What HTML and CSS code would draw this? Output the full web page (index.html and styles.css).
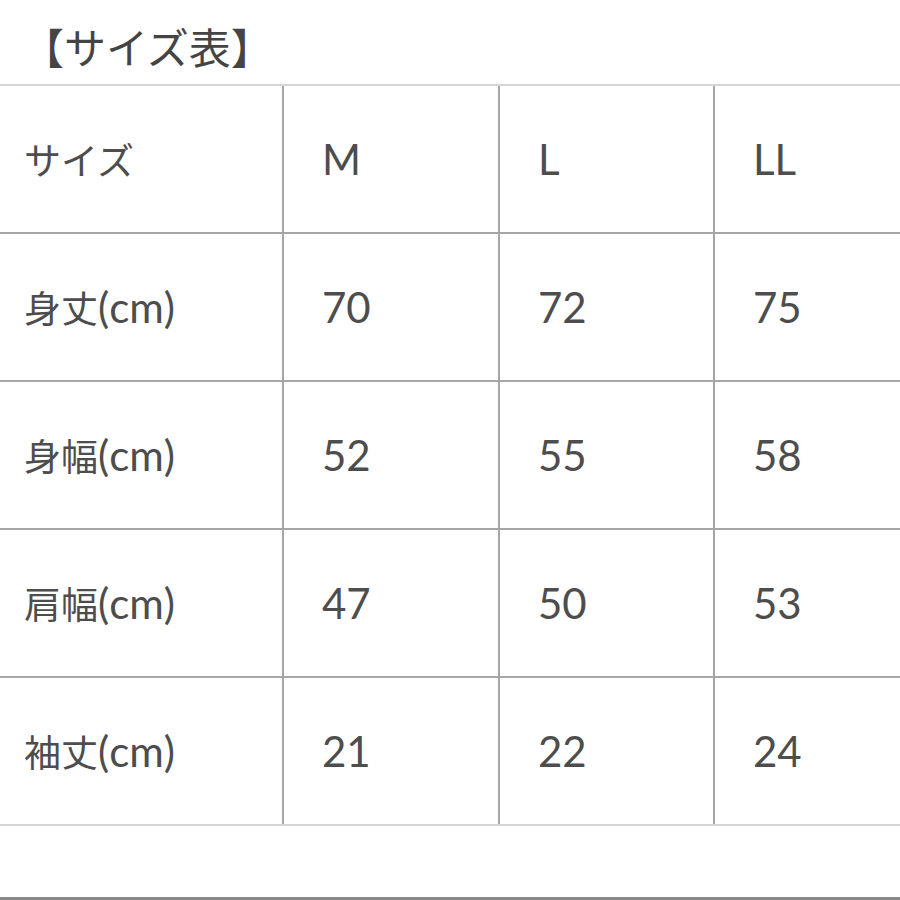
FILE: index.html
```
<!DOCTYPE html>
<html lang="ja">
<head>
<meta charset="utf-8">
<title>サイズ表</title>
<link rel="stylesheet" href="styles.css">
</head>
<body>
<div class="page">
  <h1 class="title">【サイズ表】</h1>
  <div class="table-wrap">
    <table class="size-table">
      <colgroup>
        <col class="c1"><col class="c2"><col class="c3"><col class="c4">
      </colgroup>
      <tbody>
        <tr><td><span class="jp">サイズ</span></td><td>M</td><td>L</td><td>LL</td></tr>
        <tr><td><span class="jp">身丈</span>(cm)</td><td>70</td><td>72</td><td>75</td></tr>
        <tr><td><span class="jp">身幅</span>(cm)</td><td>52</td><td>55</td><td>58</td></tr>
        <tr><td><span class="jp">肩幅</span>(cm)</td><td>47</td><td>50</td><td>53</td></tr>
        <tr><td><span class="jp">袖丈</span>(cm)</td><td>21</td><td>22</td><td>24</td></tr>
      </tbody>
    </table>
  </div>
  <div class="spacer"></div>
  <div class="bottom-rule"></div>
</div>
</body>
</html>
```
FILE: styles.css
```
html, body {
  margin: 0;
  padding: 0;
  background: #ffffff;
}
.page {
  width: 900px;
  height: 900px;
  overflow: hidden;
  display: flex;
  flex-direction: column;
  font-family: Lato, "Noto Sans CJK JP", sans-serif;
  color: #4d4d4d;
}
.title {
  margin: 0;
  height: 84px;
  box-sizing: border-box;
  padding: 22px 0 0 22px;
  font-size: 42px;
  line-height: 48px;
  font-weight: 400;
  font-family: "Noto Sans CJK JP", sans-serif;
  color: #444444;
}
.table-wrap {
  width: 900px;
  overflow: hidden;
}
.size-table {
  width: 932px;
  table-layout: fixed;
  border-collapse: collapse;
}
.c1 { width: 283px; }
.c2 { width: 216px; }
.c3 { width: 215px; }
.c4 { width: 218px; }
.size-table td {
  height: 148px;
  padding: 0 0 0 38px;
  box-sizing: border-box;
  border-bottom: 2px solid #a6a6a6;
  border-left: 2px solid #a6a6a6;
  font-size: 42px;
  font-weight: 400;
  line-height: 1;
  vertical-align: middle;
  white-space: nowrap;
}
.size-table td:first-child {
  border-left: none;
  padding-left: 24px;
}
.jp {
  font-family: "Noto Sans CJK JP", sans-serif;
  font-size: 37px;
  font-weight: 400;
}
.size-table tr:first-child td {
  border-top: 2px solid #d6d6d6;
}
.size-table tr:last-child td {
  border-bottom: 2px solid #d6d6d6;
}
.spacer {
  flex: 1;
}
.bottom-rule {
  height: 3px;
  background: #8a8a8a;
}
```
